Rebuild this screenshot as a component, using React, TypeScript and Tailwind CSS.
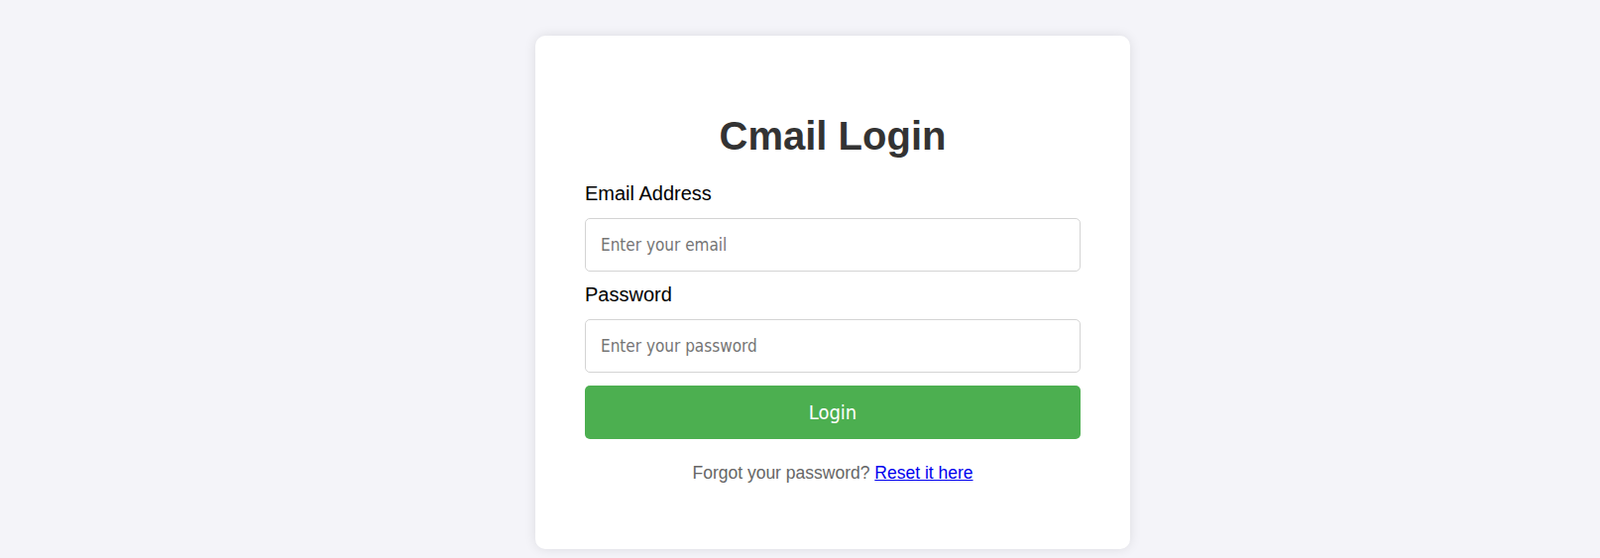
export default function App() {
  return (
    <div className="min-h-[563px] bg-[#f4f4f9] pt-[36px] font-['Liberation_Sans',Arial,sans-serif]">
      <div className="ml-[540px] w-[600px] rounded-[10px] bg-white px-[50px] pt-[78px] pb-[67px] shadow-[0_0_12px_rgba(0,0,0,0.1)]">
        <h1 className="mb-[24px] text-center text-[40px] leading-[46px] font-bold text-[#333]">Cmail Login</h1>
        <form onSubmit={(e) => e.preventDefault()}>
          <label htmlFor="email" className="mb-[13px] block text-[20px] leading-[23px] text-black">
            Email Address
          </label>
          <input
            id="email"
            type="email"
            placeholder="Enter your email"
            className="mb-[12px] block h-[54px] w-full rounded-[5px] border border-[#d4d4d4] px-[15px] font-['DejaVu_Sans_Condensed','DejaVu_Sans',sans-serif] text-[17px] text-[#333] placeholder:text-[#757575] focus:outline-none"
          />
          <label htmlFor="password" className="mb-[13px] block text-[20px] leading-[23px] text-black">
            Password
          </label>
          <input
            id="password"
            type="password"
            placeholder="Enter your password"
            className="mb-[13px] block h-[54px] w-full rounded-[5px] border border-[#d4d4d4] px-[15px] font-['DejaVu_Sans_Condensed','DejaVu_Sans',sans-serif] text-[17px] text-[#333] placeholder:text-[#757575] focus:outline-none"
          />
          <button
            type="submit"
            className="block h-[54px] w-full rounded-[5px] bg-[#4caf50] font-['DejaVu_Sans_Condensed','DejaVu_Sans',sans-serif] text-[20px] text-white"
          >
            Login
          </button>
        </form>
        <p className="mt-[24px] text-center text-[17.5px] leading-[20px] text-[#666]">
          Forgot your password?{" "}
          <a href="#" className="text-[#0000ee] underline">
            Reset it here
          </a>
        </p>
      </div>
    </div>
  );
}
